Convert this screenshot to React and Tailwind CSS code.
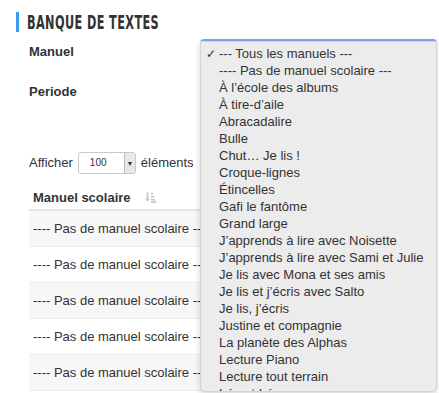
import { useState } from 'react'

const manuels = [
  '---- Pas de manuel scolaire ---',
  'À l’école des albums',
  'À tire-d’aile',
  'Abracadalire',
  'Bulle',
  'Chut… Je lis !',
  'Croque-lignes',
  'Étincelles',
  'Gafi le fantôme',
  'Grand large',
  'J’apprends à lire avec Noisette',
  'J’apprends à lire avec Sami et Julie',
  'Je lis avec Mona et ses amis',
  'Je lis et j’écris avec Salto',
  'Je lis, j’écris',
  'Justine et compagnie',
  'La planète des Alphas',
  'Lecture Piano',
  'Lecture tout terrain',
  'Léa et Léo',
]

function SortIcon() {
  return (
    <svg width="11" height="11" viewBox="0 0 11 11" className="text-[#c4c4c4]">
      <path d="M2.5 0.5v8" stroke="currentColor" strokeWidth="1.6" />
      <path d="M0 6.5l2.5 3 2.5-3z" fill="currentColor" />
      <rect x="6" y="1" width="2" height="1.6" fill="currentColor" />
      <rect x="6" y="4" width="3" height="1.6" fill="currentColor" />
      <rect x="6" y="7" width="4" height="1.6" fill="currentColor" />
      <rect x="6" y="9.4" width="5" height="1.6" fill="currentColor" />
    </svg>
  )
}

export default function App() {
  const [rows] = useState(5)

  return (
    <div className="relative h-[393px] w-[439px] overflow-hidden bg-white text-[13px] text-[#333] font-['Liberation_Sans',Arial,sans-serif]">
      <div className="pl-4 pt-3">
        <div className="flex h-5 items-center border-l-[3px] border-[#3d9be6] pl-2">
          <h1 className="origin-left scale-x-[0.66] whitespace-nowrap text-[19px] font-bold uppercase leading-none tracking-[0.6px] text-[#333] font-['DejaVu_Sans_Condensed','DejaVu_Sans',sans-serif]">
            Banque de textes
          </h1>
        </div>

        <div className="pl-[13px]">
          <div className="mt-[11px] flex h-[18px] items-center font-bold">Manuel</div>
          <div className="mt-[22px] flex h-[18px] items-center font-bold">Periode</div>

          <div className="mt-[51px] flex h-[22px] items-center gap-[5px]">
            <span>Afficher</span>
            <div className="flex h-[22px] w-[58px] items-center overflow-hidden rounded-[3px] border border-[#c8c8c8] bg-white">
              <span className="flex-1 pl-[11px] text-[10px] leading-none">100</span>
              <span className="flex h-full w-[11px] items-center justify-center border-l border-[#bbb] bg-[#e8e8e8] text-[7px] leading-none">▼</span>
            </div>
            <span>éléments</span>
          </div>

          <div className="mt-[12px] w-[400px]">
            <div className="flex h-[25px] items-center gap-[14px] border-b-2 border-[#e6e6e6] pl-1 font-bold">
              <span>Manuel scolaire</span>
              <SortIcon />
            </div>
            {Array.from({ length: rows }).map((_, i) => (
              <div
                key={i}
                className={`flex h-[36px] items-center border-b border-[#ececec] pl-1 whitespace-nowrap ${i % 2 === 0 ? 'bg-[#f7f7f7]' : 'bg-white'}`}
              >
                ---- Pas de manuel scolaire ---
              </div>
            ))}
          </div>
        </div>
      </div>

      {/* focused select behind the open list */}
      <div className="absolute left-[200px] top-[39px] h-[22px] w-[237px] rounded-[4px] border-2 border-[#7aaaf0] bg-white" />

      {/* open native list */}
      <div className="absolute left-[200px] top-[41px] h-[351px] w-[237px] overflow-hidden rounded-b-[5px] border border-[#d4d4d4] bg-[#ececec] pt-[3px] shadow-[0_2px_6px_rgba(0,0,0,0.18)]">
        <div className="flex h-[17px] items-center whitespace-nowrap pl-[5px]">
          <span className="w-[13px] text-[12px]">✓</span>
          <span>--- Tous les manuels ---</span>
        </div>
        {manuels.map(m => (
          <div key={m} className="flex h-[17px] items-center whitespace-nowrap pl-[18px]">
            {m}
          </div>
        ))}
      </div>
    </div>
  )
}
